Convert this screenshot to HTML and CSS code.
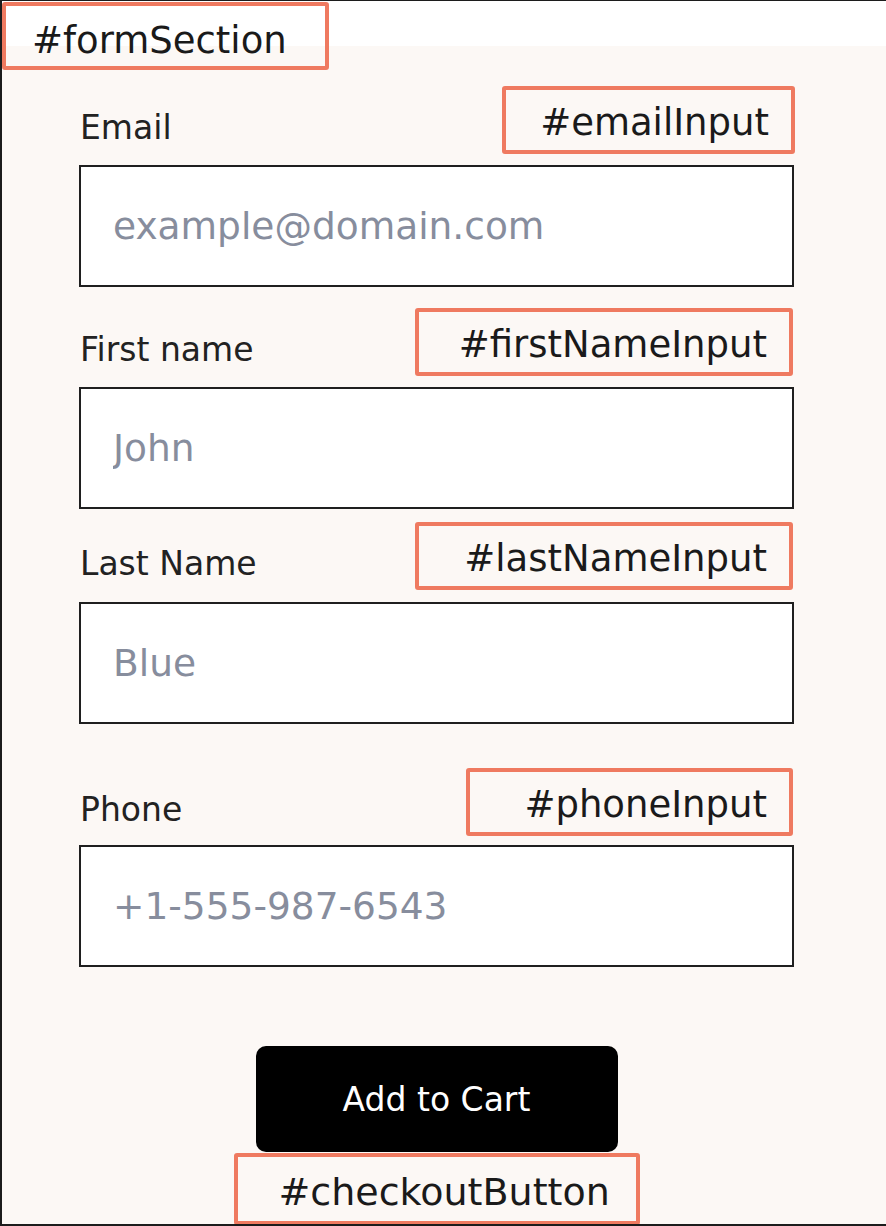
FILE: index.html
```html
<!DOCTYPE html>
<html lang="en">
<head>
<meta charset="utf-8">
<title>Form Section</title>
<link rel="stylesheet" href="styles.css">
</head>
<body>
<div class="frame">
  <div class="topbar"></div>
  <span class="tag tag-section">#formSection</span>
  <form class="form">
    <div class="field field-email">
      <div class="label-row">
        <label class="label" for="email">Email</label>
        <span class="tag tag-email">#emailInput</span>
      </div>
      <input class="input" id="email" type="text" placeholder="example@domain.com">
    </div>
    <div class="field field-first">
      <div class="label-row">
        <label class="label" for="first">First name</label>
        <span class="tag tag-first">#firstNameInput</span>
      </div>
      <input class="input" id="first" type="text" placeholder="John">
    </div>
    <div class="field field-last">
      <div class="label-row">
        <label class="label" for="last">Last Name</label>
        <span class="tag tag-last">#lastNameInput</span>
      </div>
      <input class="input" id="last" type="text" placeholder="Blue">
    </div>
    <div class="field field-phone">
      <div class="label-row">
        <label class="label" for="phone">Phone</label>
        <span class="tag tag-phone">#phoneInput</span>
      </div>
      <input class="input" id="phone" type="text" placeholder="+1-555-987-6543">
    </div>
    <div class="actions">
      <button class="button" type="button">Add to Cart</button>
      <span class="tag tag-button">#checkoutButton</span>
    </div>
  </form>
</div>
</body>
</html>
```
FILE: styles.css
```css
* { box-sizing: border-box; }
html, body { margin: 0; padding: 0; background: #1c1c1c; }
body { font-family: "DejaVu Sans", "Noto Sans", sans-serif; }

.frame {
  position: relative;
  width: 886px;
  height: 1226px;
  border-left: 2px solid #1c1c1c;
  border-top: 1px solid #1c1c1c;
  border-bottom: 2px solid #1c1c1c;
  background: #fcf8f5;
  overflow: hidden;
}
.topbar { height: 45px; background: #ffffff; }

.tag {
  display: inline-flex;
  align-items: center;
  height: 68px;
  border: 4px solid #ef7a60;
  border-radius: 3px;
  font-size: 37px;
  color: #1a1a1a;
  justify-content: flex-end;
  padding-right: 22px;
  padding-top: 4px;
  line-height: 1;
  white-space: nowrap;
}
.tag-section {
  position: absolute;
  left: 0;
  top: 1px;
  width: 327px;
  justify-content: flex-start;
  padding-left: 26px;
  padding-top: 9px;
}

.form {
  display: flex;
  flex-direction: column;
  padding-left: 77px;
  width: 794px;
}
.field { display: flex; flex-direction: column; }
.label-row {
  display: flex;
  justify-content: space-between;
  align-items: center;
  height: 68px;
}
.label { font-size: 33px; color: #222222; padding-left: 1px; padding-top: 14px; }

.input {
  width: 715px;
  height: 122px;
  border: 2px solid #1f1f1f;
  background: #ffffff;
  font-family: inherit;
  font-size: 37.5px;
  padding: 0 32px;
  color: #1a1a1a;
  outline: none;
}
.input::placeholder { color: #878d9d; }

.field-email { margin-top: 40px; }
.field-email .label-row { margin-bottom: 11px; }
.tag-email { width: 293px; margin-right: 1px; }
.field-first { margin-top: 21px; }
.field-first .label-row { margin-bottom: 11px; }
.tag-first { width: 378px; margin-right: 3px; }
.field-last { margin-top: 13px; }
.field-last .label-row { margin-bottom: 12px; }
.tag-last { width: 378px; margin-right: 3px; }
.field-phone { margin-top: 44px; }
.field-phone .label-row { margin-bottom: 9px; }
.tag-phone { width: 327px; margin-right: 3px; }

.actions {
  display: flex;
  flex-direction: column;
  align-items: center;
  margin-top: 79px;
  width: 715px;
}
.button {
  width: 362px;
  height: 106px;
  background: #000000;
  color: #ffffff;
  border: none;
  border-radius: 10px;
  font-family: inherit;
  font-size: 33px;
}
.tag-button {
  width: 406px;
  height: 72px;
  margin-top: 1px;
  font-size: 38px;
  justify-content: flex-start;
  padding-left: 41px;
  padding-top: 6px;
}
```
